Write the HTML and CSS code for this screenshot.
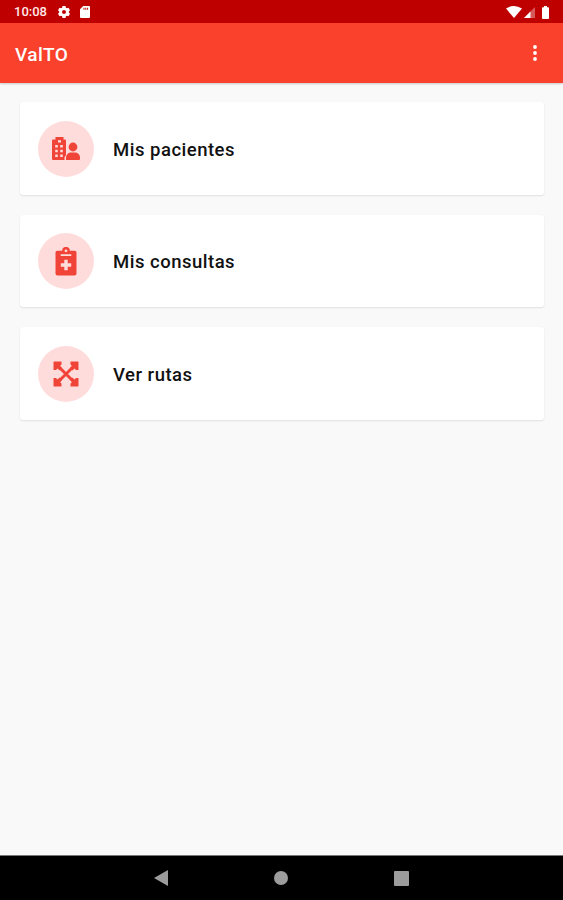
FILE: index.html
```html
<!DOCTYPE html>
<html lang="es">

<head>
    <meta charset="UTF-8">
    <title>ValTO</title>
    <link rel="stylesheet" href="styles.css">
</head>

<body>
    <div class="screen">
        <div class="status-bar">
            <span class="time">10:08</span>
            <svg class="gear" width="12" height="12" viewBox="0 0 12 12">
                <path fill-rule="evenodd" d="M4.5 0h3l.4 1.7 1 .6 1.6-.5L12 4.3l-1.2 1.2v1L12 7.7l-1.5 2.5-1.6-.5-1 .6-.4 1.7h-3l-.4-1.7-1-.6-1.6.5L0 7.7l1.2-1.2v-1L0 4.3l1.5-2.5 1.6.5 1-.6zM6 4a2 2 0 1 0 0 4 2 2 0 0 0 0-4z"/>
            </svg>
            <svg class="sd" width="10" height="12" viewBox="0 0 10 12">
                <path fill-rule="evenodd" d="M3.2 0H9a1 1 0 0 1 1 1v10a1 1 0 0 1-1 1H1a1 1 0 0 1-1-1V3.2zM3.5 1.8v2h1v-2zM5.3 1.8v2h1v-2zM7.1 1.8v2h1v-2z"/>
            </svg>
            <div class="signals">
                <svg width="16" height="12" viewBox="0 0 16 12">
                    <path d="M0 2.6Q8-2.6 16 2.6L8 12z"/>
                </svg>
                <svg width="11" height="11" viewBox="0 0 11 11">
                    <path d="M11 0v11H0z" opacity=".35"/>
                    <path d="M6.5 4.5V11H0z"/>
                </svg>
                <svg class="battery" width="7" height="13" viewBox="0 0 7 13">
                    <path d="M2 0h3v1.2h1.2a.8.8 0 0 1 .8.8v10.2a.8.8 0 0 1-.8.8H.8a.8.8 0 0 1-.8-.8V2a.8.8 0 0 1 .8-.8H2z"/>
                </svg>
            </div>
        </div>

        <div class="toolbar">
            <h1>ValTO</h1>
            <svg width="4" height="16" viewBox="0 0 4 16">
                <circle cx="2" cy="2" r="1.9"/>
                <circle cx="2" cy="8" r="1.9"/>
                <circle cx="2" cy="14" r="1.9"/>
            </svg>
        </div>

        <div class="menu">
            <div class="card">
                <div class="circle">
                    <!-- hospital + patient -->
                    <svg width="28" height="24" viewBox="0 0 28 24">
                        <path fill-rule="evenodd" d="M3.5 0h8v2.5H13a1 1 0 0 1 1 1V18l-1.5 2.5V23H1a1 1 0 0 1-1-1V3.5a1 1 0 0 1 1-1h2.5zM6 3.2v2.3h3V3.2zM3.2 8v2.6h2.6V8zM8.2 8v2.6h2.6V8zM3.2 12.7v2.6h2.6v-2.6zM8.2 12.7v2.6h2.6v-2.6zM3.2 17.4V20h2.6v-2.6zM8.2 17.4V20h2.6v-2.6z"/>
                        <circle cx="21" cy="10" r="4.4"/>
                        <path d="M14 23v-2.5a5 5 0 0 1 5-5h4a5 5 0 0 1 5 5V22a1 1 0 0 1-1 1z"/>
                    </svg>
                </div>
                <span>Mis pacientes</span>
            </div>
            <div class="card">
                <div class="circle">
                    <!-- clipboard with a cross -->
                    <svg width="22" height="29" viewBox="0 0 22 29">
                        <path fill-rule="evenodd" d="M2.5 3.7h4.7a3.8 3.8 0 0 1 7.6 0h4.7A2 2 0 0 1 21.5 6v20.5a2 2 0 0 1-2 2h-17a2 2 0 0 1-2-2V6a2 2 0 0 1 2-2.3zM11 2.4a1.4 1.4 0 1 0 0 2.8 1.4 1.4 0 0 0 0-2.8zM5.7 7.3v1.8h10.6V7.3zM9.3 12.8v3.5H5.8v3.4h3.5v3.5h3.4v-3.5h3.5v-3.4h-3.5v-3.5z"/>
                    </svg>
                </div>
                <span>Mis consultas</span>
            </div>
            <div class="card">
                <div class="circle">
                    <!-- arrows to the four corners -->
                    <svg width="26" height="26" viewBox="0 0 26 26">
                        <path class="cross" d="M4 4l18 18M22 4L4 22"/>
                        <path d="M1 .5h7.5v3L7 5l2 2-2.5 2.5-2-2L3 9H.5V1zM25 .5h-7.5v3L19 5l-2 2 2.5 2.5 2-2L23 9h2.5V1zM1 25.5h7.5v-3L7 21l2-2-2.5-2.5-2 2L3 17H.5v8zM25 25.5h-7.5v-3L19 21l-2-2 2.5-2.5 2 2L23 17h2.5v8z"/>
                    </svg>
                </div>
                <span>Ver rutas</span>
            </div>
        </div>

        <div class="nav-bar">
            <svg width="14" height="16" viewBox="0 0 14 16"><path d="M14 0v16L0 8z"/></svg>
            <svg width="14" height="14" viewBox="0 0 14 14"><circle cx="7" cy="7" r="7"/></svg>
            <svg width="15" height="15" viewBox="0 0 15 15"><rect width="15" height="15" rx="1"/></svg>
        </div>
    </div>
</body>

</html>
```
FILE: styles.css
```css
* {
    margin: 0;
    box-sizing: border-box;
}

body {
    background-color: #f9f9f9;
    font-family: Roboto, "Liberation Sans", sans-serif;
}

svg {
    display: block;
    flex: none;
}

.screen {
    height: 100vh;
    display: flex;
    flex-direction: column;
}

.status-bar {
    height: 23px;
    padding: 1px 14px 0;
    display: flex;
    align-items: center;
    background-color: #bf0000;
    color: #ffe9e9;
    fill: #fff;
}

.time {
    width: 33px;
    font-size: 13px;
    font-weight: 500;
    line-height: 22px;
}

.gear {
    margin-left: 11px;
}

.sd {
    margin-left: 10px;
}

.signals {
    margin-left: auto;
    display: flex;
    align-items: center;
    gap: 2px;
}

.battery {
    margin-left: 5px;
}

.toolbar {
    height: 60px;
    padding: 0 26px 0 15px;
    display: flex;
    align-items: center;
    justify-content: space-between;
    background-color: #f9412c;
    box-shadow: 0 1px 2px rgba(0, 0, 0, 0.2);
    color: #fff;
    fill: #fff;
}

.toolbar h1 {
    padding-top: 2px;
    font-size: 19px;
    font-weight: 500;
    letter-spacing: 0.4px;
}

.menu {
    flex: 1;
    padding: 19px 19px 0 20px;
    display: flex;
    flex-direction: column;
    gap: 20px;
}

.card {
    height: 92.5px;
    padding-left: 18px;
    display: flex;
    align-items: center;
    gap: 19px;
    border-radius: 3px;
    background-color: #fff;
    box-shadow: 0 1px 2px rgba(0, 0, 0, 0.1);
}

.card span {
    padding-top: 3px;
    font-size: 18.5px;
    font-weight: 500;
    letter-spacing: 0.5px;
    color: #111;
}

.circle {
    width: 56px;
    height: 56px;
    margin-top: 1px;
    display: flex;
    align-items: center;
    justify-content: center;
    border-radius: 50%;
    background-color: #ffdcdc;
    fill: #f04438;
}

.cross {
    stroke: #f04438;
    stroke-width: 3;
}

.nav-bar {
    height: 45px;
    padding: 0 154px;
    display: flex;
    align-items: center;
    justify-content: space-between;
    border-top: 1px solid #777;
    background-color: #000;
    fill: #9c9c9c;
}
```
